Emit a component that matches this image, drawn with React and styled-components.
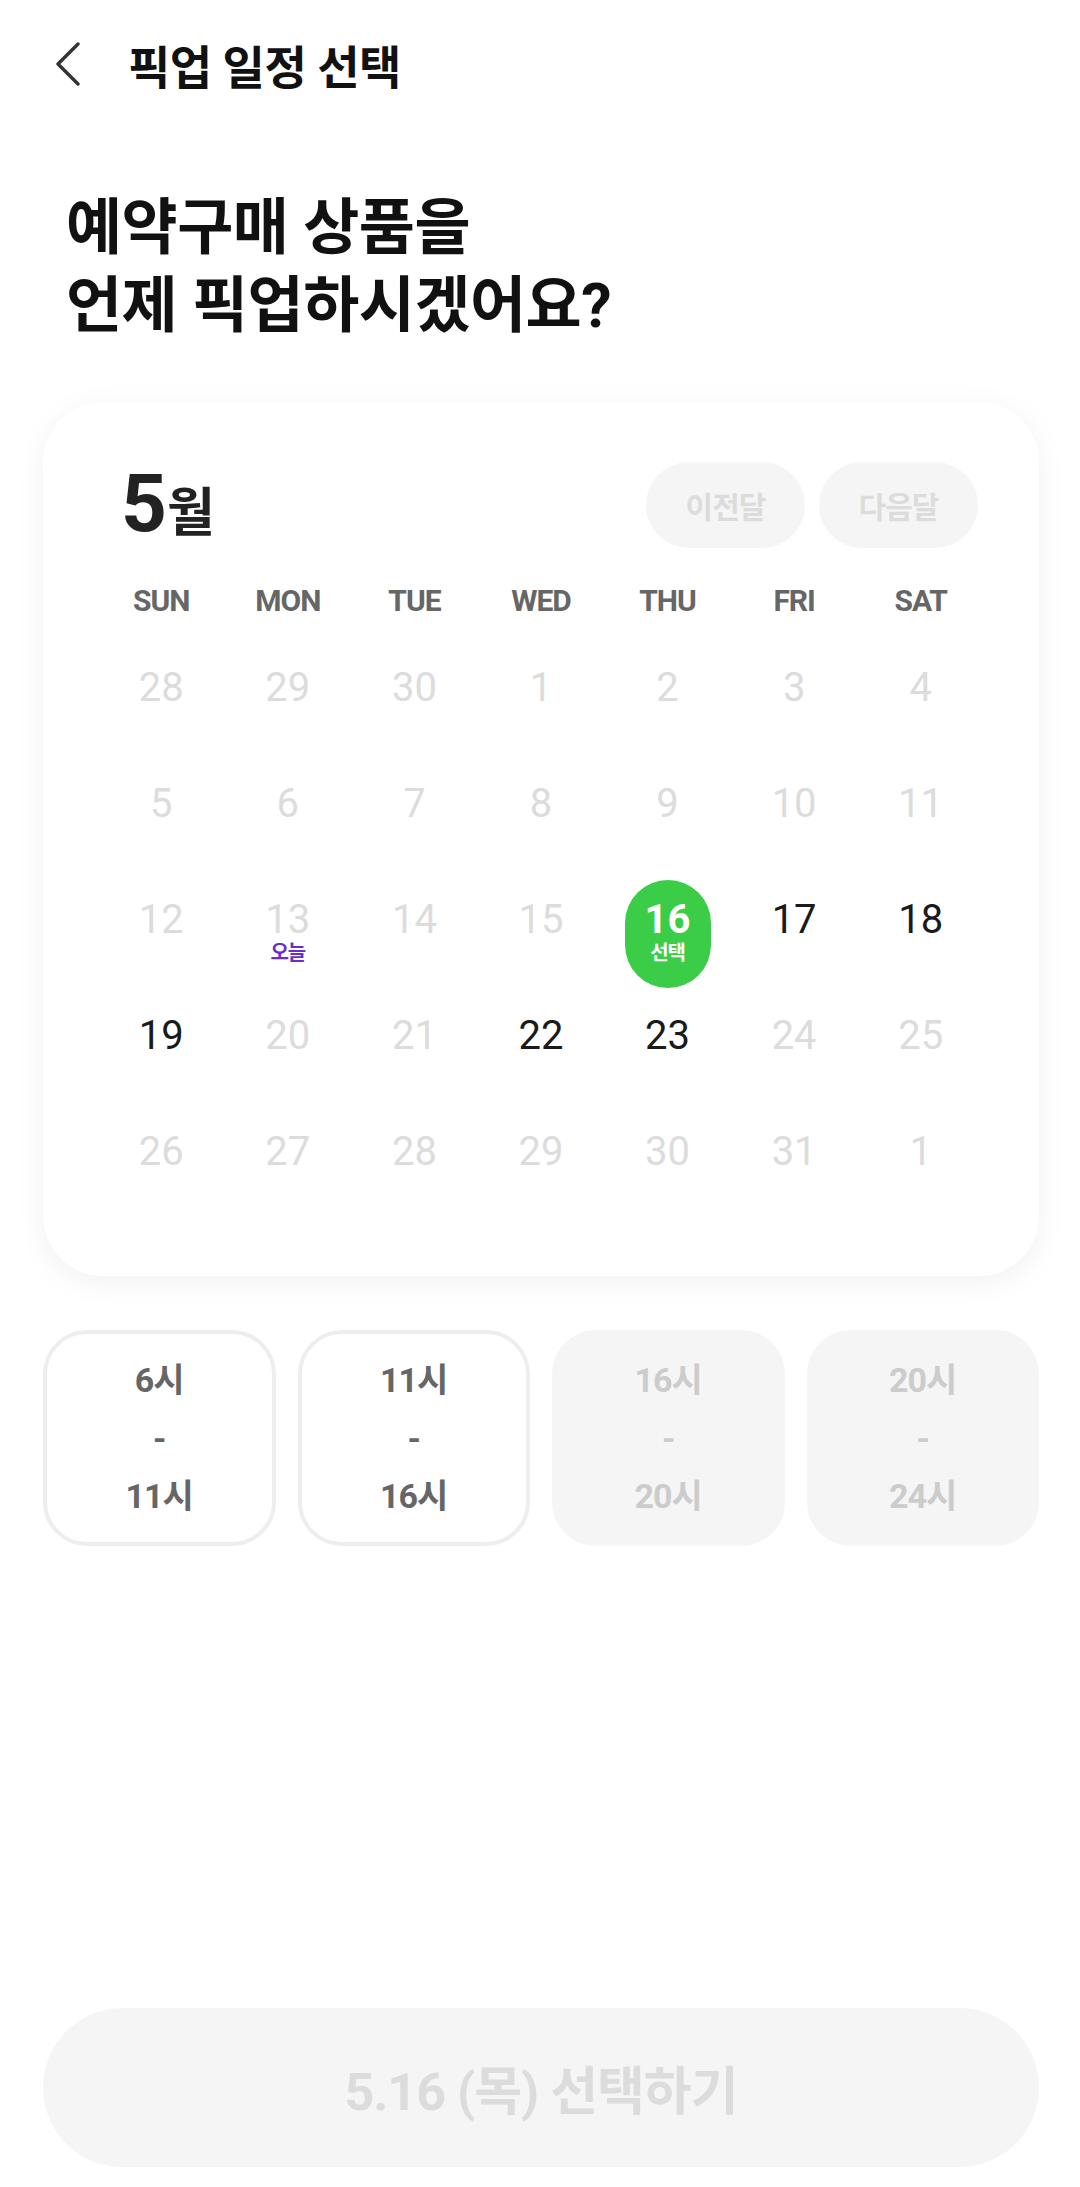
import React from "react";
import styled, { createGlobalStyle } from "styled-components";

const GlobalStyle = createGlobalStyle`
  * { box-sizing: border-box; }
  body {
    margin: 0;
    background: #fff;
    font-family: "Roboto", "Noto Sans CJK KR", sans-serif;
    color: #111;
  }
`;

const Page = styled.div`
  min-height: 100vh;
  display: flex;
  flex-direction: column;
  padding: 0 41px 20px 43px;
`;

const Header = styled.header`
  height: 128px;
  display: flex;
  align-items: center;
  padding-left: 12px;

  svg {
    width: 26px;
    height: 44px;
    margin-right: 47px;
  }
`;

const HeaderTitle = styled.h1`
  margin: 0;
  font-size: 46px;
  font-weight: 700;
  letter-spacing: -0.5px;
  color: #111;
`;

const Heading = styled.h2`
  margin: 61px 0 0 23px;
  font-size: 61px;
  line-height: 78px;
  font-weight: 700;
  letter-spacing: -0.5px;
  color: #111;
`;

const Card = styled.section`
  margin-top: 57px;
  background: #fff;
  border-radius: 60px;
  padding: 60px 55px 65px;
  box-shadow: 0 6px 30px rgba(0, 0, 0, 0.06);
`;

const CardTop = styled.div`
  display: flex;
  justify-content: space-between;
  align-items: center;
  height: 86px;
`;

const Month = styled.div`
  margin-left: 23px;
  display: flex;
  align-items: baseline;
  color: #222;
  font-weight: 700;

  b {
    font-size: 80px;
    font-weight: 700;
    line-height: 1;
  }
  span {
    font-size: 52px;
    letter-spacing: -2px;
  }
`;

const NavGroup = styled.div`
  display: flex;
  gap: 14px;
  margin-right: 6px;
`;

const NavButton = styled.button`
  width: 159px;
  height: 86px;
  border: none;
  border-radius: 43px;
  background: #f5f5f5;
  color: #dcdcdc;
  font-family: inherit;
  font-size: 30px;
  font-weight: 700;
  letter-spacing: -1px;
`;

const WeekRow = styled.div`
  margin-top: 27px;
  height: 50px;
  display: grid;
  grid-template-columns: repeat(7, 1fr);
  align-items: center;
  text-align: center;
  font-size: 30px;
  font-weight: 700;
  letter-spacing: -1px;
  color: #666;
`;

const DateGrid = styled.div`
  margin-top: 6px;
  display: grid;
  grid-template-columns: repeat(7, 1fr);
  grid-auto-rows: 116px;
`;

const Cell = styled.div`
  display: flex;
  justify-content: center;
  align-items: flex-start;
  padding-top: 17px;
`;

const DayMark = styled.div`
  width: 86px;
  padding: 20px 0 22px;
  border-radius: 43px;
  display: flex;
  flex-direction: column;
  align-items: center;
  background: ${(p) => (p.$selected ? "#3ccd48" : "transparent")};
`;

const DayNum = styled.span`
  font-size: 40px;
  line-height: 40px;
  font-weight: ${(p) => (p.$selected ? 700 : 400)};
  color: ${(p) => (p.$selected ? "#fff" : p.$off ? "#dcdcdc" : "#1a1a1a")};
`;

const DayLabel = styled.span`
  font-size: 20px;
  line-height: 26px;
  font-weight: 700;
  letter-spacing: -1px;
  color: ${(p) => (p.$selected ? "#fff" : "#6c2dc7")};
`;

const SlotRow = styled.div`
  margin-top: 54px;
  display: grid;
  grid-template-columns: repeat(4, 1fr);
  gap: 22px;
`;

const Slot = styled.button`
  height: 216px;
  border-radius: 44px;
  border: 4px solid ${(p) => (p.$disabled ? "#f5f5f5" : "#eeeeee")};
  background: ${(p) => (p.$disabled ? "#f5f5f5" : "#fff")};
  color: ${(p) => (p.$disabled ? "#cccccc" : "#666")};
  display: flex;
  flex-direction: column;
  align-items: center;
  justify-content: center;
  font-family: inherit;
  font-size: 34px;
  font-weight: 700;
  letter-spacing: -1px;
  line-height: 58px;
  padding: 0;
`;

const SubmitButton = styled.button`
  margin-top: auto;
  height: 159px;
  border: none;
  border-radius: 80px;
  background: #f5f5f5;
  color: #dcdcdc;
  font-family: inherit;
  font-size: 52px;
  font-weight: 700;
  letter-spacing: -1px;
`;

const weekdays = ["SUN", "MON", "TUE", "WED", "THU", "FRI", "SAT"];

const days = [
  ...[28, 29, 30].map((d) => ({ d, off: true })),
  ...[1, 2, 3, 4, 5, 6, 7, 8, 9, 10, 11, 12].map((d) => ({ d, off: true })),
  { d: 13, off: true, label: "오늘" },
  { d: 14, off: true },
  { d: 15, off: true },
  { d: 16, selected: true, label: "선택" },
  { d: 17 },
  { d: 18 },
  { d: 19 },
  { d: 20, off: true },
  { d: 21, off: true },
  { d: 22 },
  { d: 23 },
  ...[24, 25, 26, 27, 28, 29, 30, 31, 1].map((d) => ({ d, off: true })),
];

const slots = [
  { from: "6시", to: "11시" },
  { from: "11시", to: "16시" },
  { from: "16시", to: "20시", disabled: true },
  { from: "20시", to: "24시", disabled: true },
];

const App = () => {
  return (
    <Page>
      <GlobalStyle />
      <Header>
        <svg viewBox="0 0 26 44" fill="none">
          <path
            d="M23 2 L3 22 L23 42"
            stroke="#333"
            strokeWidth="3.4"
            strokeLinecap="round"
            strokeLinejoin="round"
          />
        </svg>
        <HeaderTitle>픽업 일정 선택</HeaderTitle>
      </Header>

      <Heading>
        예약구매 상품을
        <br />
        언제 픽업하시겠어요?
      </Heading>

      <Card>
        <CardTop>
          <Month>
            <b>5</b>
            <span>월</span>
          </Month>
          <NavGroup>
            <NavButton>이전달</NavButton>
            <NavButton>다음달</NavButton>
          </NavGroup>
        </CardTop>

        <WeekRow>
          {weekdays.map((w) => (
            <div key={w}>{w}</div>
          ))}
        </WeekRow>

        <DateGrid>
          {days.map((day, i) => (
            <Cell key={i}>
              <DayMark $selected={day.selected}>
                <DayNum $off={day.off} $selected={day.selected}>
                  {day.d}
                </DayNum>
                {day.label && (
                  <DayLabel $selected={day.selected}>{day.label}</DayLabel>
                )}
              </DayMark>
            </Cell>
          ))}
        </DateGrid>
      </Card>

      <SlotRow>
        {slots.map((s) => (
          <Slot key={s.from} $disabled={s.disabled}>
            <span>{s.from}</span>
            <span>-</span>
            <span>{s.to}</span>
          </Slot>
        ))}
      </SlotRow>

      <SubmitButton>5.16 (목) 선택하기</SubmitButton>
    </Page>
  );
};

export default App;
